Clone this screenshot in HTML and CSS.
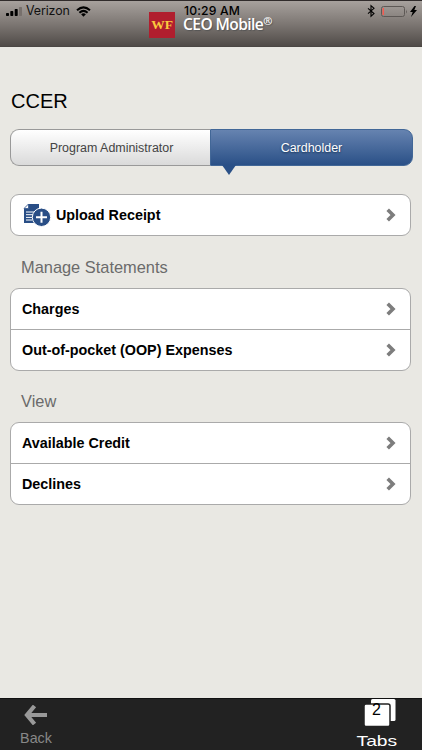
FILE: index.html
```html
<!DOCTYPE html>
<html lang="en">
<head>
<meta charset="utf-8">
<title>CEO Mobile</title>
<link rel="stylesheet" href="styles.css">
</head>
<body>
<div class="app">
  <header class="header">
    <div class="status">
      <div class="carrier">
        <svg width="16" height="9" viewBox="0 0 16 9"><rect y="6" width="3" height="3" rx=".7"/><rect x="4.3" y="4" width="3" height="5" rx=".7"/><rect x="8.7" y="2" width="3" height="7" rx=".7"/><rect x="13" width="3" height="9" rx=".7" fill="#77706c"/></svg>
        <span class="carrier-name">Verizon</span>
        <svg class="wifi" width="15" height="11" viewBox="0 0 15 11"><path d="M1 4.2Q7.5-1.5 14 4.2M3.4 6.7Q7.5 3 11.6 6.7" fill="none" stroke="#000" stroke-width="2"/><path d="M5.1 8.3Q7.5 6.4 9.9 8.3L7.5 10.8Z"/></svg>
      </div>
      <time class="clock">10:29 AM</time>
      <svg class="power" width="51" height="14" viewBox="0 0 51 14"><path d="M1 4.3L7 9.6L4 12.2V1.7L7 4.3L1 9.6" fill="none" stroke="#000" stroke-width="1.1"/><rect x="14.5" y="2.5" width="23" height="10" rx="2" fill="none" stroke="#5d5855"/><path d="M15.5 4H17v7h-1.5z" fill="#f45b50"/><path d="M39 5.5q1.5 2 0 4z" fill="#5d5855"/><path d="M47.5 2L43 8h2.7L44 13l6-7h-2.7L49 2z"/></svg>
    </div>
    <div class="brand">
      <div class="logo">WF</div>
      <div class="brand-name">CEO Mobile<sup>®</sup></div>
    </div>
  </header>
  <main class="content">
    <h1>CCER</h1>
    <nav class="tabs">
      <div class="tab">Program Administrator</div>
      <div class="tab active">Cardholder</div>
    </nav>
    <section class="card upload">
      <div class="row">
        <svg class="receipt" width="28" height="24" viewBox="0 0 28 24"><path d="M5.5 1H16v19H1V5.5z" fill="#294e86"/><path d="M1 5.5L5.5 1v4.5z" fill="#fff" stroke="#294e86" stroke-width=".7"/><path d="M3 9h9M3 11.7h8M3 14.4h6M3 17h6" stroke="#fff" stroke-width="1"/><circle cx="18.5" cy="14.3" r="9.2" fill="#294e86" stroke="#fff"/><path d="M13 14.3h11M18.5 8.8v11" stroke="#fff" stroke-width="2"/></svg>
        <span class="label">Upload Receipt</span>
        <svg class="chevron" width="10" height="14" viewBox="0 0 10 14"><path d="M1.7 1.7L7 7L1.7 12.3"/></svg>
      </div>
    </section>
    <h2>Manage Statements</h2>
    <section class="card">
      <div class="row"><span class="label">Charges</span><svg class="chevron" width="10" height="14" viewBox="0 0 10 14"><path d="M1.7 1.7L7 7L1.7 12.3"/></svg></div>
      <div class="row"><span class="label">Out-of-pocket (OOP) Expenses</span><svg class="chevron" width="10" height="14" viewBox="0 0 10 14"><path d="M1.7 1.7L7 7L1.7 12.3"/></svg></div>
    </section>
    <h2 class="view-title">View</h2>
    <section class="card">
      <div class="row"><span class="label">Available Credit</span><svg class="chevron" width="10" height="14" viewBox="0 0 10 14"><path d="M1.7 1.7L7 7L1.7 12.3"/></svg></div>
      <div class="row"><span class="label">Declines</span><svg class="chevron" width="10" height="14" viewBox="0 0 10 14"><path d="M1.7 1.7L7 7L1.7 12.3"/></svg></div>
    </section>
  </main>
  <footer class="footer">
    <div class="back">
      <svg width="24" height="20" viewBox="0 0 24 20"><path d="M10.5 1L3 10L10.5 19M3 10H23" fill="none" stroke="#999" stroke-width="4.2"/></svg>
      <span>Back</span>
    </div>
    <div class="open-tabs">
      <div class="tab-icon">
        <svg width="32" height="28" viewBox="0 0 32 28"><rect x="7" y="0" width="24.5" height="22" rx="1.5" fill="#fff"/><rect x="0" y="5" width="26" height="22.5" rx="2" fill="#fff" stroke="#222" stroke-width="1.5"/></svg>
        <span class="count">2</span>
      </div>
      <span class="tabs-label">Tabs</span>
    </div>
  </footer>
</div>
</body>
</html>
```

FILE: styles.css
```css
* { box-sizing: border-box; }
body { margin: 0; font-family: "Liberation Sans", Arial, sans-serif; }
svg { display: block; flex: none; }
.app { width: 422px; height: 750px; display: flex; flex-direction: column; background: #e9e8e3; overflow: hidden; }
.header { height: 47px; flex: none; position: relative; border-top: 1px solid #302b2b; background: linear-gradient(#a7a19d, #7e7874 50%, #504b48); border-bottom: 1px solid #4b4744; }
.status { display: grid; grid-template-columns: 1fr auto 1fr; height: 20px; padding: 0 4px 0 6px; align-items: center; }
.carrier { display: flex; align-items: center; }
.carrier-name { font: 12.4px/20px Inter, sans-serif; margin-left: 4px; letter-spacing: -.1px; color: #111; }
.wifi { margin-left: 6px; }
.clock { font: 500 12.2px/20px Inter, sans-serif; letter-spacing: .15px; position: relative; z-index: 1; }
.power { justify-self: end; }
.brand { position: absolute; left: 149px; top: 11px; display: flex; }
.logo { width: 26px; height: 26px; background: #b01e2e; color: #fbc93e; font: bold 13.5px/26px "Liberation Serif", serif; text-align: center; }
.brand-name { margin-left: 8px; font: 600 15.6px/24px "Open Sans", sans-serif; letter-spacing: -.6px; color: #fff; text-shadow: 1px 1px 1px #555; white-space: nowrap; }
.brand-name sup { font-size: 11px; line-height: 0; vertical-align: 5px; }
.content { flex: 1; padding: 42px 10px 0; }
h1 { margin: 0 0 0 1px; font-weight: 400; font-size: 20px; line-height: 24px; }
.tabs { display: flex; height: 37px; margin: 16px -1px 0 0; }
.tab { width: 200px; border: 1px solid #999; border-right: 0; border-radius: 9px 0 0 9px; background: linear-gradient(#fff, #dadada); text-align: center; font-size: 12.45px; line-height: 36px; padding-left: 2px; color: #444; }
.active { position: relative; width: 203px; padding: 0; border: 1px solid #426797; border-radius: 0 9px 9px 0; background: linear-gradient(#6683b0, #2a5087); color: #fff; text-shadow: 0 1px 2px #183457; }
.active::after { content: ""; position: absolute; left: 11px; top: 35px; border: 7px solid transparent; border-top: 10px solid #2a5087; border-bottom: 0; }
.card { border: 1px solid #aaa; border-radius: 9px; background: #fff; margin-right: 1px; }
.upload { margin-top: 28px; }
.row { height: 40px; display: flex; align-items: center; padding: 0 14px 0 11px; }
.row + .row { height: 41px; border-top: 1px solid #aaa; }
.label { font-size: 14.35px; font-weight: 700; flex: 1; white-space: nowrap; }
.receipt { margin: -1px 5px 0 1px; }
.chevron path { fill: none; stroke: #7d7d7d; stroke-width: 3.6; }
h2 { margin: 22px 0 11px 11px; font-size: 16.4px; line-height: 19px; font-weight: 400; color: #6b6b6b; }
.view-title { margin-top: 21px; }
.footer { height: 52px; flex: none; background: #222; border-top: 1px solid #111; display: flex; justify-content: space-between; }
.back { width: 72px; padding-top: 6px; display: flex; flex-direction: column; align-items: center; color: #888; font-size: 14.3px; line-height: 26px; }
.open-tabs { width: 91px; display: flex; flex-direction: column; align-items: center; color: #fff; }
.tab-icon { position: relative; margin-left: 7px; }
.count { position: absolute; left: 8px; top: 2px; font-size: 16px; line-height: 18px; color: #000; }
.tabs-label { font-size: 15px; line-height: 28px; transform: scaleX(1.28); }
```
